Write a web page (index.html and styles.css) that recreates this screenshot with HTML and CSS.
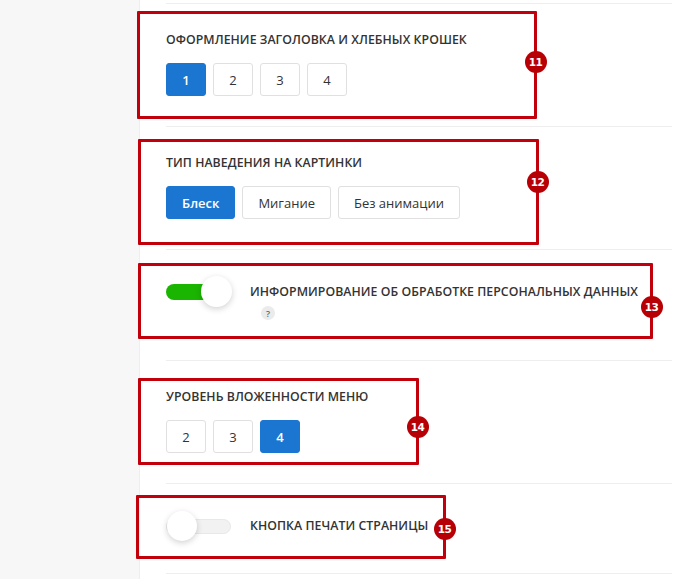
FILE: index.html
```html
<!DOCTYPE html>
<html lang="ru">
<head>
<meta charset="utf-8">
<title>Настройки</title>
<link rel="stylesheet" href="styles.css">
</head>
<body>
<div class="page">
  <aside class="sidebar"></aside>
  <main class="content">
    <section class="opt">
      <div class="opt-title">Оформление заголовка и хлебных крошек</div>
      <div class="btns">
        <span class="btn num active">1</span>
        <span class="btn num">2</span>
        <span class="btn num">3</span>
        <span class="btn num">4</span>
      </div>
    </section>
    <section class="opt">
      <div class="opt-title">Тип наведения на картинки</div>
      <div class="btns">
        <span class="btn active">Блеск</span>
        <span class="btn">Мигание</span>
        <span class="btn">Без анимации</span>
      </div>
    </section>
    <section class="opt opt-switch opt-switch-help">
      <div class="switch-row">
        <span class="toggle on"><span class="track"></span><span class="knob"></span></span>
        <div class="switch-text">
          <div class="opt-title">Информирование об обработке персональных данных</div>
          <span class="help">?</span>
        </div>
      </div>
    </section>
    <section class="opt">
      <div class="opt-title">Уровень вложенности меню</div>
      <div class="btns">
        <span class="btn num">2</span>
        <span class="btn num">3</span>
        <span class="btn num active">4</span>
      </div>
    </section>
    <section class="opt opt-switch last">
      <div class="switch-row">
        <span class="toggle off"><span class="track"></span><span class="knob"></span></span>
        <div class="switch-text">
          <div class="opt-title">Кнопка печати страницы</div>
        </div>
      </div>
    </section>
  </main>

  <div class="mark m11"><span class="badge b11">11</span></div>
  <div class="mark m12"><span class="badge b12">12</span></div>
  <div class="mark m13"><span class="badge b13">13</span></div>
  <div class="mark m14"><span class="badge b14">14</span></div>
  <div class="mark m15"><span class="badge b15">15</span></div>
</div>
</body>
</html>
```

FILE: styles.css
```css
* { box-sizing: border-box; }
html, body { margin: 0; padding: 0; background: #fff; }
body {
  font-family: "Open Sans", "Noto Sans", "DejaVu Sans", sans-serif;
  color: #333;
}
.page {
  position: relative;
  display: flex;
  min-height: 579px;
}
.sidebar {
  width: 140px;
  flex: none;
  background: #f7f7f7;
  border-right: 1px solid #eeeeee;
}
.content {
  width: 532px;
  padding: 3px 0 0 26px;
}
.opt {
  border-top: 1px solid #eeeeee;
  padding: 27px 0 30px;
}
.opt.last { border-bottom: 1px solid #eeeeee; }
.opt-title {
  font-size: 12.3px;
  line-height: 18px;
  font-weight: 600;
  text-transform: uppercase;
  letter-spacing: 0.05px;
  color: #333;
  white-space: nowrap;
}
.btns {
  display: flex;
  gap: 7px;
  margin-top: 14px;
}
.btn {
  display: inline-flex;
  align-items: center;
  justify-content: center;
  height: 33px;
  padding: 0 15px;
  border: 1px solid #e0e0e0;
  border-radius: 3px;
  font-size: 13px;
  color: #333;
  background: #fff;
}
.btn.num { width: 40px; padding: 0; }
.btn.active {
  background: #1b76d1;
  border-color: #1b76d1;
  color: #fff;
  font-weight: 600;
}

.opt-switch { padding: 33px 0 38px; }
.opt-switch-help { padding-bottom: 40px; }
.switch-row { display: flex; align-items: flex-start; }
.toggle {
  position: relative;
  flex: none;
  width: 65px;
  height: 18px;
  margin-right: 19px;
}
.toggle .track {
  position: absolute;
  left: 0;
  right: 0;
  top: 1px;
  height: 16px;
  border-radius: 8px;
}
.toggle .knob {
  position: absolute;
  top: -7px;
  width: 31px;
  height: 31px;
  border-radius: 50%;
  background: #fff;
  box-shadow: 0 2px 6px rgba(0, 0, 0, 0.18);
}
.toggle.on .track { background: #1ab500; }
.toggle.on .knob { right: -1px; }
.toggle.off .track {
  top: 2px;
  height: 15px;
  background: #f2f2f2;
  border: 1px solid #e8e8e8;
}
.toggle.off .knob { left: 1px; top: -6px; width: 30px; height: 30px; }
.switch-text { display: flex; flex-direction: column; align-items: flex-start; }
.help {
  display: inline-flex;
  align-items: center;
  justify-content: center;
  width: 14px;
  height: 14px;
  margin: 5px 0 0 11px;
  border-radius: 50%;
  background: #ebebeb;
  color: #666;
  font-size: 9px;
  font-weight: 600;
  line-height: 1;
}

/* annotation overlays */
.mark {
  position: absolute;
  border: 3px solid #c2000b;
  border-radius: 1px;
}
.m11 { left: 137px; top: 11px; width: 400px; height: 108px; }
.m12 { left: 138px; top: 139px; width: 401px; height: 106px; }
.m13 { left: 138px; top: 263px; width: 515px; height: 76px; }
.m14 { left: 138px; top: 378px; width: 281px; height: 87px; }
.m15 { left: 136px; top: 495px; width: 310px; height: 64px; }
.badge {
  position: absolute;
  right: -12.5px;
  width: 22px;
  height: 22px;
  border-radius: 50%;
  background: #b70005;
  color: #fff;
  font-family: "DejaVu Sans", sans-serif;
  font-weight: 700;
  font-size: 10.5px;
  letter-spacing: -0.5px;
  display: flex;
  align-items: center;
  justify-content: center;
}
.b11 { top: 37px; }
.b12 { top: 29px; }
.b13 { top: 30px; }
.b14 { top: 35px; }
.b15 { top: 20px; }
```
